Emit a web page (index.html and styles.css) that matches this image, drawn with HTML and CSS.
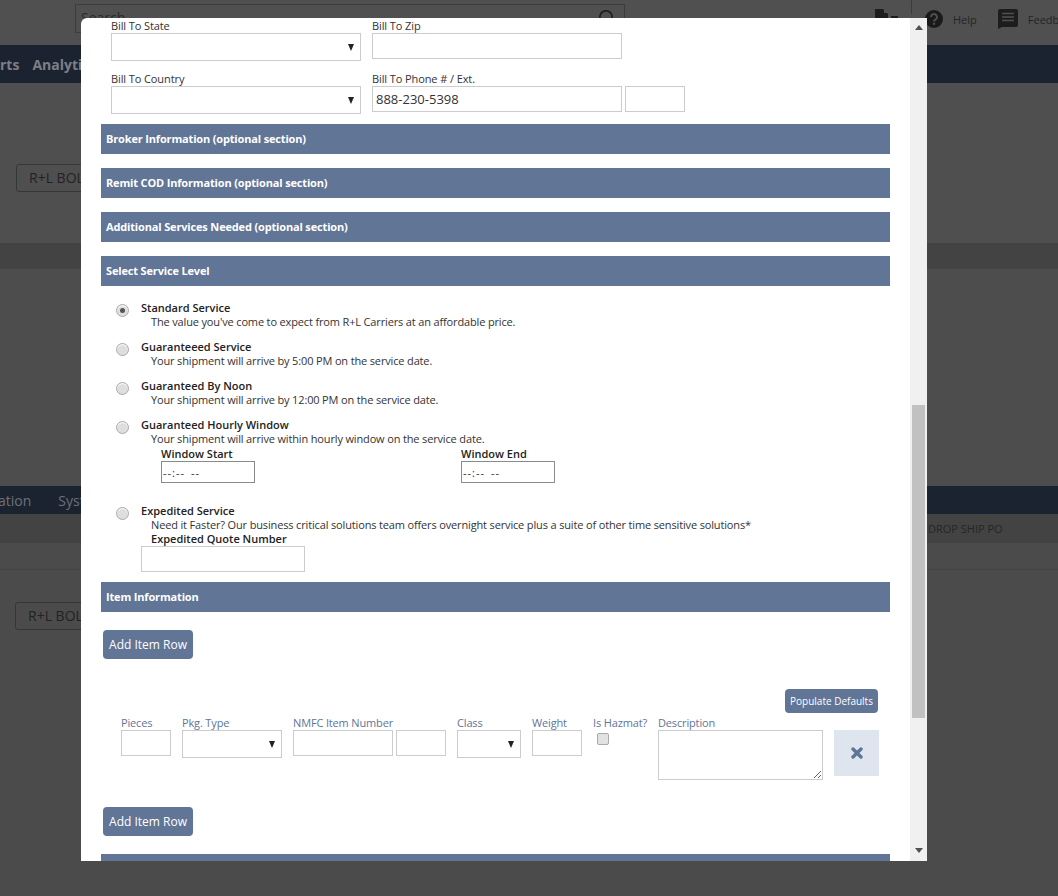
FILE: index.html
```html
<!DOCTYPE html>
<html lang="en">
<head>
<meta charset="utf-8">
<title>Create BOL</title>
<link rel="stylesheet" href="styles.css">
</head>
<body>
<div class="page">
  <header class="topbar">
    <div class="search"><span class="search-text">Search</span>
      <svg class="search-icon" width="18" height="18" viewBox="0 0 18 18"><circle cx="8" cy="8" r="6.2" fill="none" stroke="#1c1c1c" stroke-width="1.6"/><path d="M12.5 12.5L17 17" stroke="#1c1c1c" stroke-width="2"/></svg>
    </div>
    <div class="tools">
      <svg class="doc" width="24" height="18" viewBox="0 0 24 18"><path d="M0 0h8l5 5v13H0z" fill="#1d1d1d"/><path d="M9 0l4 4H9z" fill="#505050"/><path d="M16 7h7v2h-7z" fill="#1d1d1d"/></svg>
      <span class="divider"></span>
      <svg class="help-icon" width="18" height="18" viewBox="0 0 18 18"><circle cx="9" cy="9" r="9" fill="#1a1a1a"/><path d="M6 7a3 3 0 1 1 4.6 2.5C9.5 10.200 9 10.600 9 11.500" fill="none" stroke="#505050" stroke-width="2"/><rect x="8" y="12.800" width="2" height="2" fill="#505050"/></svg>
      <span class="tool-text">Help</span>
      <svg class="feedback-icon" width="20" height="20" viewBox="0 0 20 20"><path d="M2 0h16a2 2 0 0 1 2 2v14a2 2 0 0 1-2 2H4l-4 2V2a2 2 0 0 1 2-2z" fill="#1d1d1d"/><path d="M4 4.500h12M4 8h12M4 11.500h12" stroke="#505050" stroke-width="1.600"/></svg>
      <span class="tool-text feedback-text">Feedb</span>
    </div>
  </header>
  <nav class="nav nav-top"><span>rts</span><span>Analytics</span></nav>
  <div class="pane pane-a"><span class="bg-button">R+L BOL</span></div>
  <div class="stripe"></div>
  <div class="pane pane-b"></div>
  <nav class="nav nav-lower"><span>ation</span><span>System</span></nav>
  <div class="stripe stripe-lower"><span>DROP SHIP PO</span></div>
  <div class="pane pane-c"></div>
  <div class="pane pane-d"><span class="bg-button">R+L BOL</span></div>
</div>

<div class="modal">
  <div class="modal-body">
    <div class="bill-row">
      <div class="field w250"><label>Bill To State</label><div class="select"></div></div>
      <div class="field w250"><label>Bill To Zip</label><input class="input" type="text"></div>
    </div>
    <div class="bill-row bill-row-second">
      <div class="field w250"><label>Bill To Country</label><div class="select"></div></div>
      <div class="field w250"><label>Bill To Phone # / Ext.</label><input class="input" type="text" value="888-230-5398"></div>
      <div class="field ext"><label>&nbsp;</label><input class="input" type="text"></div>
    </div>

    <div class="bar">Broker Information (optional section)</div>
    <div class="bar">Remit COD Information (optional section)</div>
    <div class="bar">Additional Services Needed (optional section)</div>
    <div class="bar bar-service">Select Service Level</div>

    <div class="service"><input class="radio checked" type="radio" name="svc" checked>
      <div><div class="svc-title">Standard Service</div><div class="svc-desc">The value you've come to expect from R+L Carriers at an affordable price.</div></div></div>
    <div class="service"><input class="radio" type="radio" name="svc">
      <div><div class="svc-title">Guaranteeed Service</div><div class="svc-desc">Your shipment will arrive by 5:00 PM on the service date.</div></div></div>
    <div class="service"><input class="radio" type="radio" name="svc">
      <div><div class="svc-title">Guaranteed By Noon</div><div class="svc-desc">Your shipment will arrive by 12:00 PM on the service date.</div></div></div>
    <div class="service service-window"><input class="radio" type="radio" name="svc">
      <div><div class="svc-title">Guaranteed Hourly Window</div><div class="svc-desc">Your shipment will arrive within hourly window on the service date.</div>
        <div class="window">
          <div><div class="window-label">Window Start</div><input class="time" type="text" value="--:-- --"></div>
          <div><div class="window-label">Window End</div><input class="time" type="text" value="--:-- --"></div>
        </div>
      </div></div>
    <div class="service service-expedited"><input class="radio" type="radio" name="svc">
      <div><div class="svc-title">Expedited Service</div><div class="svc-desc">Need it Faster? Our business critical solutions team offers overnight service plus a suite of other time sensitive solutions*</div>
        <div class="window-label quote-label">Expedited Quote Number</div>
        <input class="input quote" type="text">
      </div></div>

    <div class="bar bar-item">Item Information</div>
    <button class="btn" type="button">Add Item Row</button>
    <div class="defaults"><button class="btn-small" type="button">Populate Defaults</button></div>
    <div class="items">
      <div class="item w50"><label>Pieces</label><input class="input" type="text"></div>
      <div class="item w100"><label>Pkg. Type</label><div class="select"></div></div>
      <div class="item nmfc"><label>NMFC Item Number</label><div class="nmfc-inputs"><input class="input nmfc-main" type="text"><input class="input nmfc-sub" type="text"></div></div>
      <div class="item w64"><label>Class</label><div class="select"></div></div>
      <div class="item w50"><label>Weight</label><input class="input" type="text"></div>
      <div class="item w54"><label>Is Hazmat?</label><input class="check" type="checkbox"></div>
      <div class="item w165"><label>Description</label><textarea class="textarea"></textarea></div>
      <div class="remove"><svg width="12" height="12" viewBox="0 0 12 12"><path d="M2 2l8 8M10 2l-8 8" stroke="#5f7597" stroke-width="3.400" stroke-linecap="round"/></svg></div>
    </div>
    <button class="btn btn-second" type="button">Add Item Row</button>
    <div class="bar"></div>
  </div>
  <div class="scrollbar">
    <svg class="arrow" width="8" height="5" viewBox="0 0 8 5"><path d="M4 0l4 5H0z" fill="#505050"/></svg>
    <div class="thumb"></div>
    <svg class="arrow arrow-down" width="8" height="5" viewBox="0 0 8 5"><path d="M0 0h8L4 5z" fill="#505050"/></svg>
  </div>
</div>
</body>
</html>
```
FILE: styles.css
```css
* { box-sizing: border-box; }
html, body { margin: 0; height: 100%; overflow: hidden; }
body { background: #4b4b4b; font-family: "Open Sans", "Liberation Sans", sans-serif; font-size: 11px; color: #222; }

/* dimmed page behind the dialog */
.page { height: 896px; display: flex; flex-direction: column; }
.topbar { height: 45px; flex: none; background: #505050; display: flex; padding: 4px 0 0 75px; position: relative; overflow: hidden; }
.search { width: 550px; height: 29px; flex: none; border: 1px solid #3c3c3c; display: flex; justify-content: space-between; padding: 0 8px 0 5px; }
.search-text { font-size: 14px; line-height: 26px; color: #2a2a2a; }
.search-icon { margin-top: 4px; }
.tools { display: flex; flex: none; align-items: flex-start; padding-left: 250px; }
.doc { margin-top: 5px; flex: none; }
.divider { width: 1px; height: 14px; background: #3c3c3c; margin: -4px 0 0 12px; flex: none; }
.help-icon { margin: 6px 0 0 13px; flex: none; }
.tool-text { font-size: 11px; line-height: 16px; margin: 8px 0 0 10px; color: #252525; }
.feedback-icon { margin: 5px 0 0 21px; flex: none; }
.feedback-text { margin-left: 10px; }
.nav { height: 38px; flex: none; background: #1c2330; display: flex; gap: 15px; align-items: center; font-size: 14px; font-weight: 700; color: #7c7f85; }
.nav-top { gap: 13px; }
.nav-lower { height: 28px; font-weight: 400; gap: 29px; color: #6d7079; text-indent: -2px; }
.pane { flex: none; }
.pane-a { height: 160px; background: #4f4f4f; padding: 81px 0 0 16px; }
.pane-b { height: 217px; background: #4d4d4d; }
.pane-c { height: 27px; border-bottom: 1px solid #444; }
.pane-d { flex: 1; padding: 32px 0 0 15px; }
.stripe { height: 26px; flex: none; background: #434343; }
.stripe-lower { height: 29px; padding-left: 928px; line-height: 29px; font-size: 11px; color: #262626; white-space: nowrap; }
.bg-button { display: inline-block; height: 28px; line-height: 26px; padding: 0 12px; border: 1px solid #363636; border-radius: 3px; font-size: 14px; color: #222; }

/* dialog */
.modal { position: absolute; left: 81px; top: 18px; width: 846px; height: 843px; background: #fff; border-radius: 6px 0 0 0; display: flex; overflow: hidden; }
.modal-body { width: 829px; flex: none; padding: 0 20px; overflow: hidden; }
label { display: block; font-size: 11px; line-height: 15px; color: #333; white-space: nowrap; letter-spacing: -0.1px; }

.bill-row { display: flex; gap: 11px; padding-left: 10px; }
.bill-row-second { margin-top: 10px; }
.field.ext { margin-left: -8px; width: 60px; }
.w250 { width: 250px; }
.w50 { width: 50px; }
.w54 { width: 54px; }
.w64 { width: 64px; }
.w100 { width: 100px; }
.w165 { width: 165px; }

.input { display: block; width: 100%; height: 26px; border: 1px solid #ccc; padding: 0 3px; font: 13px "Open Sans", "Liberation Sans", sans-serif; color: #333; background: #fff; border-radius: 0; outline: none; }
.select { height: 28px; border: 1px solid #ccc; background: #fff; position: relative; }
.select::after { content: ""; position: absolute; right: 6px; top: 10px; border-left: 3.500px solid transparent; border-right: 3.500px solid transparent; border-top: 7px solid #222; }

.bar { height: 30px; margin-top: 14px; padding-left: 5px; background: #617597; color: #fff; font-size: 11px; font-weight: 700; line-height: 30px; letter-spacing: -0.16px; }
.bill-row-second + .bar { margin-top: 10px; }
.bar-service { margin-bottom: 15px; }
.bar-item { margin-top: 10px; margin-bottom: 18px; }

.service { display: flex; margin-bottom: 11px; padding-left: 15px; font-size: 11px; line-height: 14px; }
.radio { appearance: none; width: 13px; height: 13px; flex: none; margin: 3px 12px 0 0; border: 1px solid #aaa; border-radius: 50%; background: #dedede; position: relative; box-shadow: inset 0 1px 1px #fff; }
.radio.checked::after { content: ""; position: absolute; left: 3px; top: 3px; width: 5px; height: 5px; border-radius: 50%; background: #555; }
.svc-title { font-weight: 600; color: #222; }
.svc-desc { padding-left: 10px; color: #333; white-space: nowrap; letter-spacing: -0.15px; }
.window { display: flex; padding: 1px 0 0 20px; }
.window > div { width: 300px; }
.window-label { font-weight: 600; line-height: 14px; color: #222; white-space: nowrap; }
.quote-label { padding-left: 10px; }
.time { display: block; width: 94px; height: 22px; border: 1px solid #8a8a8a; padding: 0 1px; font: 11px "Open Sans", "Liberation Sans", sans-serif; letter-spacing: 1px; word-spacing: 2px; color: #333; outline: none; }
.service-window { margin-bottom: 21px; }
.service-expedited { margin-bottom: 0; }
.quote { width: 164px; }

.btn { display: block; width: 90px; height: 29px; border: 0; border-radius: 4px; padding: 0; background: #617597; color: #fff; font: 12px "Open Sans", "Liberation Sans", sans-serif; margin-left: 2px; }
.btn-second { margin-top: 27px; }
.btn-second + .bar { margin-top: 18px; }
.defaults { display: flex; justify-content: flex-end; padding-right: 12px; margin-top: 30px; }
.btn-small { width: 93px; height: 24px; border: 0; border-radius: 4px; padding: 0; background: #617597; color: #fff; font: 10px "Open Sans", "Liberation Sans", sans-serif; }
.items { display: flex; gap: 11px; padding-left: 20px; margin-top: 2px; }
.item label { color: #617597; letter-spacing: -0.15px; }
.nmfc { width: 153px; }
.nmfc-inputs { display: flex; gap: 3px; }
.nmfc-main { width: 100px; flex: none; }
.nmfc-sub { width: 50px; flex: none; }
.check { appearance: none; display: block; width: 12px; height: 12px; margin: 3px 0 0 4px; border: 1px solid #aaa; border-radius: 2px; background: #e2e2e2; }
.textarea { display: block; width: 100%; height: 50px; border: 1px solid #ccc; border-radius: 0; padding: 2px; outline: none; resize: both; }
.remove { width: 45px; height: 46px; margin-top: 15px; background: #dfe5ef; display: flex; align-items: center; justify-content: center; flex: none; }

.scrollbar { width: 17px; flex: none; background: #f0f0f0; display: flex; flex-direction: column; align-items: center; position: relative; }
.arrow { margin-top: 7px; flex: none; }
.thumb { width: 13px; height: 313px; margin-top: 375px; background: #c1c1c1; flex: none; }
.arrow-down { margin-top: 130px; }
```
